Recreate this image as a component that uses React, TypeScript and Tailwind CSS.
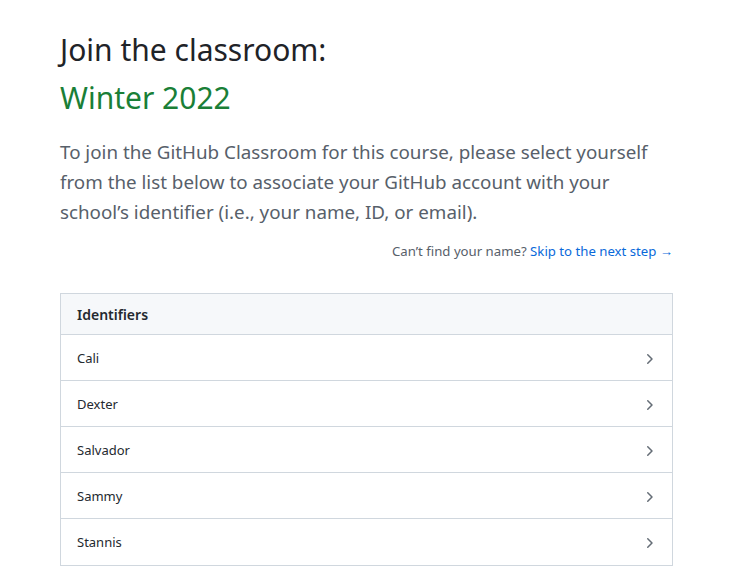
import React from "react";

const names = ["Cali", "Dexter", "Salvador", "Sammy", "Stannis"];

function Chevron() {
  return (
    <svg width="16" height="16" viewBox="0 0 16 16" fill="#656d76" aria-hidden="true">
      <path d="M6.22 3.22a.75.75 0 0 1 1.06 0l4.25 4.25a.75.75 0 0 1 0 1.06l-4.25 4.25a.751.751 0 0 1-1.042-.018.751.751 0 0 1-.018-1.042L9.94 8 6.22 4.28a.75.75 0 0 1 0-1.06Z" />
    </svg>
  );
}

export default function App() {
  return (
    <div className="min-h-[569px] bg-white px-[60px] pt-[26px]" style={{ fontFamily: '"Noto Sans", "Open Sans", sans-serif' }}>
      <h1 className="text-[30px] leading-[48px] font-normal text-[#1f2328]">
        Join the classroom:
        <br />
        <span className="text-[#1a7f37]">Winter 2022</span>
      </h1>
      <p className="mt-[15px] text-[18.8px] leading-[30px] text-[#57606a]">
        To join the GitHub Classroom for this course, please select yourself
        <br />
        from the list below to associate your GitHub account with your
        <br />
        school’s identifier (i.e., your name, ID, or email).
      </p>
      <p className="mt-[14px] text-right text-[13.2px] leading-[20px] text-[#57606a]">
        Can’t find your name? <a className="text-[#0969da]" href="#">Skip to the next step →</a>
      </p>
      <div className="mt-[32px] border border-[#d0d7de]">
        <div className="h-[41px] flex items-center px-[16px] bg-[#f6f8fa] text-[14px] font-semibold text-[#24292f] border-b border-[#d0d7de]">
          Identifiers
        </div>
        {names.map((n, i) => (
          <div key={n} className={"h-[46px] pt-[2px] flex items-center justify-between pl-[16px] pr-[15px] text-[13px] text-[#24292f]" + (i < names.length - 1 ? " border-b border-[#d0d7de]" : "")}>
            <span>{n}</span>
            <Chevron />
          </div>
        ))}
      </div>
    </div>
  );
}
